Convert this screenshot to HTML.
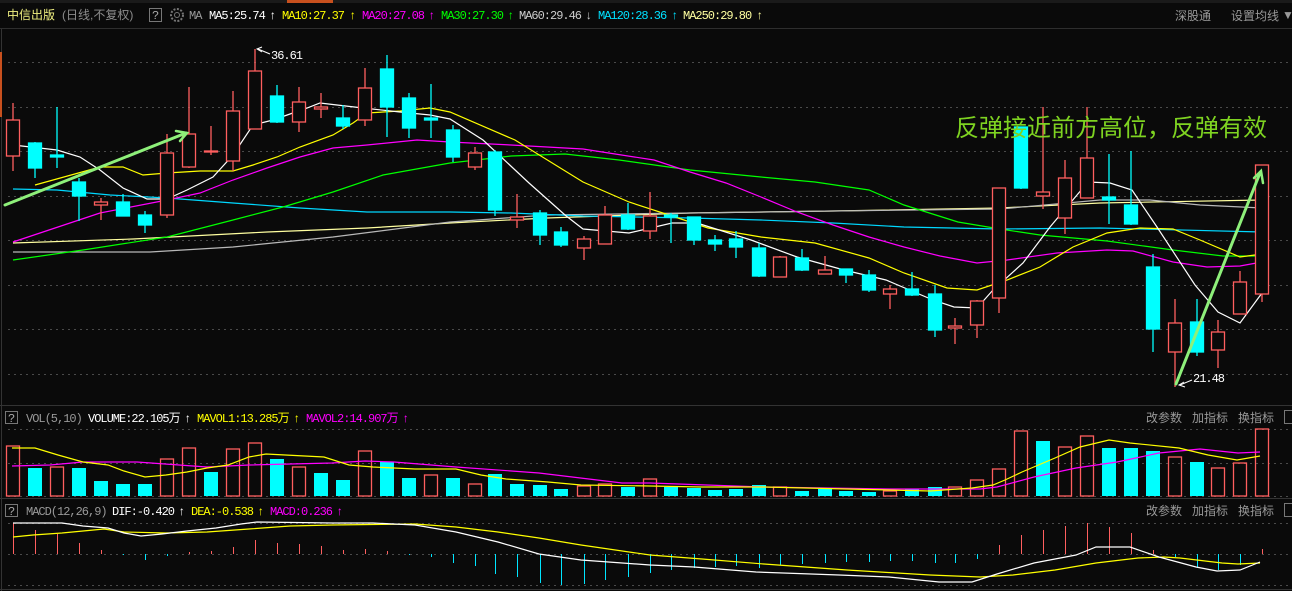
<!DOCTYPE html>
<html><head><meta charset="utf-8"><style>
html,body{margin:0;padding:0;background:#0a0a0a;}
svg{display:block}
.m{font-family:"Liberation Mono",monospace;font-size:12px;letter-spacing:-1px}
.c{font-family:"Liberation Sans","Noto Sans CJK SC",sans-serif;font-size:12px}
</style></head><body>
<svg width="1292" height="591" viewBox="0 0 1292 591" xmlns="http://www.w3.org/2000/svg">
<rect width="1292" height="591" fill="#0a0a0a"/>
<rect x="0" y="0" width="1292" height="3" fill="#1a1a1a"/>
<rect x="287" y="0" width="46" height="3" fill="#c8501e"/>
<line x1="0" y1="28.5" x2="1292" y2="28.5" stroke="#2e2e2e"/>
<line x1="1.5" y1="29" x2="1.5" y2="591" stroke="#333"/>
<rect x="0" y="52" width="2" height="65" fill="#c8501e"/>
<line x1="0" y1="405.5" x2="1292" y2="405.5" stroke="#333"/>
<line x1="0" y1="498.5" x2="1292" y2="498.5" stroke="#333"/>
<line x1="0" y1="589.5" x2="1292" y2="589.5" stroke="#333"/>
<g stroke="#4a4a4a" stroke-dasharray="2,4" stroke-width="1">
<line x1="8" y1="62.5" x2="1292" y2="62.5"/><line x1="8" y1="107.5" x2="1292" y2="107.5"/>
<line x1="8" y1="151.5" x2="1292" y2="151.5"/><line x1="8" y1="196.5" x2="1292" y2="196.5"/>
<line x1="8" y1="240.5" x2="1292" y2="240.5"/><line x1="8" y1="285.5" x2="1292" y2="285.5"/>
<line x1="8" y1="329.5" x2="1292" y2="329.5"/><line x1="8" y1="374.5" x2="1292" y2="374.5"/>
<line x1="8" y1="429.5" x2="1292" y2="429.5"/><line x1="8" y1="463.5" x2="1292" y2="463.5"/>
<line x1="8" y1="496.5" x2="1292" y2="496.5"/>
<line x1="8" y1="523.5" x2="1292" y2="523.5"/><line x1="8" y1="554.5" x2="1292" y2="554.5"/>
<line x1="8" y1="585.5" x2="1292" y2="585.5"/>
</g>
<text x="7" y="19" class="c" fill="#f0f080">中信出版</text>
<text x="62" y="19" class="c" fill="#8c8c8c">(日线,不复权)</text>
<rect x="149.5" y="8.5" width="12" height="13" fill="none" stroke="#777"/>
<text x="152" y="19" class="m" fill="#aaa">?</text>
<circle cx="177" cy="15" r="6" fill="none" stroke="#777" stroke-width="2" stroke-dasharray="2,1.5"/>
<circle cx="177" cy="15" r="2.5" fill="none" stroke="#777"/>
<text x="189" y="19" class="m" fill="#999">MA</text>
<text x="209" y="19" class="m" fill="#fff">MA5:25.74</text><text x="269" y="19" class="m" fill="#fff">↑</text>
<text x="282" y="19" class="m" fill="#ff0">MA10:27.37</text><text x="349" y="19" class="m" fill="#ff0">↑</text>
<text x="362" y="19" class="m" fill="#f0f">MA20:27.08</text><text x="428" y="19" class="m" fill="#f0f">↑</text>
<text x="441" y="19" class="m" fill="#0f0">MA30:27.30</text><text x="507" y="19" class="m" fill="#0f0">↑</text>
<text x="519" y="19" class="m" fill="#ccc">MA60:29.46</text><text x="585" y="19" class="m" fill="#ccc">↓</text>
<text x="598" y="19" class="m" fill="#00e0ff">MA120:28.36</text><text x="671" y="19" class="m" fill="#00e0ff">↑</text>
<text x="683" y="19" class="m" fill="#ffffa0">MA250:29.80</text><text x="756" y="19" class="m" fill="#ffffa0">↑</text>
<text x="1175" y="20" class="c" fill="#999">深股通</text>
<text x="1231" y="20" class="c" fill="#999">设置均线</text>
<text x="1282" y="19" class="c" fill="#999" font-size="9">▼</text>

<g fill="none" stroke-width="1.2">
<polyline stroke="#ffffa0" points="13,243 133,239 267,232 367,228 450,223 547,218 690,213 833,211 1000,208 1100,203 1262,200"/>
<polyline stroke="#b8b8b8" points="13,252 150,252 233,247 333,237 450,222 547,215 690,213 833,211 1000,209 1100,200 1150,200 1200,205 1262,208"/>
<polyline stroke="#00d8ff" points="13,189 57,190 110,195 167,198 233,203 300,208 367,212 450,212 511,213 583,216 690,218 761,220 833,223 904,227 1000,229 1100,228 1262,232"/>
<polyline stroke="#00ff00" points="13,260 83,250 167,237 233,220 283,207 333,192 383,175 450,163 511,156 565,154 619,160 690,170 761,177 815,182 869,190 904,205 958,222 1000,229 1040,235 1107,241 1173,250 1223,256 1262,256"/>
<polyline stroke="#ff00ff" points="13,242 100,213 167,200 200,193 233,180 267,168 300,157 333,148 367,145 417,140 450,142 511,145 583,149 654,160 690,172 726,183 761,197 797,212 833,225 869,237 904,247 940,256 977,263 1007,260 1057,253 1107,250 1133,251 1173,262 1207,267 1240,266 1262,262"/>
<polyline stroke="#ffff00" points="35,185 100,167 123,167 143,175 167,173 200,171 233,171 253,165 277,157 300,147 333,135 353,123 367,113 400,111 430,108 450,112 515,140 583,182 629,202 669,215 708,228 761,237 815,243 869,258 904,273 947,288 977,290 1007,280 1040,267 1073,247 1107,233 1140,228 1173,229 1200,240 1240,257 1262,254"/>
<polyline stroke="#ffffff" points="13,145 57,150 80,157 100,170 123,188 147,199 167,199 187,190 213,177 233,155 253,125 273,120 307,108 320,103 337,105 363,108 400,112 430,115 450,119 483,140 529,183 565,215 583,229 629,233 672,223 697,223 751,240 797,257 844,270 886,280 933,300 954,307 977,308 993,290 1023,263 1050,227 1088,182 1110,183 1132,190 1157,227 1195,285 1218,312 1240,323 1262,293"/>
</g>

<g stroke-width="1.3">
<g stroke="#ff5f5f" fill="#0a0a0a">
<line x1="13" y1="103" x2="13" y2="171"/><rect x="6.5" y="120" width="13" height="36"/>
<line x1="101" y1="198" x2="101" y2="220"/><rect x="94.5" y="202" width="13" height="3"/>
<line x1="167" y1="134" x2="167" y2="218"/><rect x="160.5" y="153" width="13" height="62"/>
<line x1="189" y1="87" x2="189" y2="168"/><rect x="182.5" y="134" width="13" height="33"/>
<line x1="211" y1="126" x2="211" y2="155"/><rect x="204.5" y="151" width="13" height="1"/>
<line x1="233" y1="91" x2="233" y2="171"/><rect x="226.5" y="111" width="13" height="50"/>
<line x1="255" y1="49" x2="255" y2="129"/><rect x="248.5" y="71" width="13" height="58"/>
<line x1="299" y1="87" x2="299" y2="132"/><rect x="292.5" y="102" width="13" height="20"/>
<line x1="321" y1="93" x2="321" y2="118"/><rect x="314.5" y="107" width="13" height="2"/>
<line x1="365" y1="68" x2="365" y2="126"/><rect x="358.5" y="88" width="13" height="32"/>
<line x1="475" y1="147" x2="475" y2="170"/><rect x="468.5" y="153" width="13" height="14"/>
<line x1="517" y1="194" x2="517" y2="228"/><rect x="510.5" y="217" width="13" height="3"/>
<line x1="584" y1="236" x2="584" y2="260"/><rect x="577.5" y="239" width="13" height="9"/>
<line x1="605" y1="206" x2="605" y2="244"/><rect x="598.5" y="215" width="13" height="29"/>
<line x1="650" y1="192" x2="650" y2="239"/><rect x="643.5" y="216" width="13" height="15"/>
<line x1="780" y1="256" x2="780" y2="277"/><rect x="773.5" y="257" width="13" height="20"/>
<line x1="825" y1="256" x2="825" y2="274"/><rect x="818.5" y="270" width="13" height="4"/>
<line x1="890" y1="285" x2="890" y2="309"/><rect x="883.5" y="289" width="13" height="5"/>
<line x1="955" y1="318" x2="955" y2="344"/><rect x="948.5" y="326" width="13" height="2"/>
<line x1="977" y1="300" x2="977" y2="338"/><rect x="970.5" y="301" width="13" height="24"/>
<line x1="999" y1="188" x2="999" y2="313"/><rect x="992.5" y="188" width="13" height="110"/>
<line x1="1043" y1="107" x2="1043" y2="209"/><rect x="1036.5" y="192" width="13" height="4"/>
<line x1="1065" y1="160" x2="1065" y2="234"/><rect x="1058.5" y="178" width="13" height="40"/>
<line x1="1087" y1="107" x2="1087" y2="198"/><rect x="1080.5" y="158" width="13" height="40"/>
<line x1="1175" y1="299" x2="1175" y2="387"/><rect x="1168.5" y="323" width="13" height="29"/>
<line x1="1218" y1="320" x2="1218" y2="368"/><rect x="1211.5" y="332" width="13" height="18"/>
<line x1="1240" y1="271" x2="1240" y2="314"/><rect x="1233.5" y="282" width="13" height="32"/>
<line x1="1262" y1="165" x2="1262" y2="302"/><rect x="1255.5" y="165" width="13" height="129"/>
</g>
<g stroke="#00ffff" fill="#00ffff">
<line x1="35" y1="142" x2="35" y2="178"/><rect x="28.5" y="143" width="13" height="25"/>
<line x1="57" y1="107" x2="57" y2="168"/><rect x="50.5" y="155" width="13" height="2"/>
<line x1="79" y1="178" x2="79" y2="221"/><rect x="72.5" y="182" width="13" height="14"/>
<line x1="123" y1="194" x2="123" y2="216"/><rect x="116.5" y="202" width="13" height="14"/>
<line x1="145" y1="211" x2="145" y2="233"/><rect x="138.5" y="215" width="13" height="10"/>
<line x1="277" y1="85" x2="277" y2="123"/><rect x="270.5" y="96" width="13" height="26"/>
<line x1="343" y1="105" x2="343" y2="129"/><rect x="336.5" y="118" width="13" height="8"/>
<line x1="387" y1="55" x2="387" y2="137"/><rect x="380.5" y="69" width="13" height="38"/>
<line x1="409" y1="93" x2="409" y2="138"/><rect x="402.5" y="98" width="13" height="30"/>
<line x1="431" y1="84" x2="431" y2="138"/><rect x="424.5" y="118" width="13" height="2"/>
<line x1="453" y1="125" x2="453" y2="162"/><rect x="446.5" y="130" width="13" height="27"/>
<line x1="495" y1="150" x2="495" y2="216"/><rect x="488.5" y="152" width="13" height="58"/>
<line x1="540" y1="210" x2="540" y2="245"/><rect x="533.5" y="213" width="13" height="22"/>
<line x1="561" y1="227" x2="561" y2="247"/><rect x="554.5" y="232" width="13" height="13"/>
<line x1="628" y1="203" x2="628" y2="230"/><rect x="621.5" y="215" width="13" height="14"/>
<line x1="671" y1="213" x2="671" y2="243"/><rect x="664.5" y="215" width="13" height="2"/>
<line x1="694" y1="217" x2="694" y2="245"/><rect x="687.5" y="217" width="13" height="23"/>
<line x1="715" y1="235" x2="715" y2="251"/><rect x="708.5" y="240" width="13" height="4"/>
<line x1="736" y1="231" x2="736" y2="258"/><rect x="729.5" y="239" width="13" height="8"/>
<line x1="759" y1="243" x2="759" y2="277"/><rect x="752.5" y="248" width="13" height="28"/>
<line x1="802" y1="249" x2="802" y2="271"/><rect x="795.5" y="258" width="13" height="12"/>
<line x1="846" y1="269" x2="846" y2="283"/><rect x="839.5" y="269" width="13" height="6"/>
<line x1="869" y1="270" x2="869" y2="292"/><rect x="862.5" y="275" width="13" height="15"/>
<line x1="912" y1="272" x2="912" y2="296"/><rect x="905.5" y="289" width="13" height="6"/>
<line x1="935" y1="285" x2="935" y2="337"/><rect x="928.5" y="294" width="13" height="36"/>
<line x1="1021" y1="127" x2="1021" y2="189"/><rect x="1014.5" y="127" width="13" height="61"/>
<line x1="1109" y1="154" x2="1109" y2="224"/><rect x="1102.5" y="197" width="13" height="3"/>
<line x1="1131" y1="151" x2="1131" y2="225"/><rect x="1124.5" y="205" width="13" height="19"/>
<line x1="1153" y1="254" x2="1153" y2="352"/><rect x="1146.5" y="267" width="13" height="62"/>
<line x1="1197" y1="299" x2="1197" y2="356"/><rect x="1190.5" y="322" width="13" height="30"/>
</g>
</g>

<g stroke="#8ef07a" stroke-width="3" fill="none" stroke-linecap="round">
<line x1="5" y1="205" x2="186" y2="133"/>
<polyline points="176,131 187,133 180,141" stroke-width="2.5"/>
<line x1="1176" y1="384" x2="1260" y2="173"/>
<polyline points="1254,178 1261,171 1263,183" stroke-width="2.5"/>
</g>
<text x="955" y="136" font-family="Liberation Sans,'Noto Sans CJK SC',sans-serif" font-size="24" fill="#7ed321">反弹接近前方高位，反弹有效</text>
<g stroke="#fff" stroke-width="1" fill="none"><line x1="258" y1="49" x2="270" y2="54"/><polyline points="262,47 257,49 262,52"/>
<line x1="1180" y1="385" x2="1192" y2="380"/><polyline points="1184,382 1179,385 1185,387"/></g>
<text x="271" y="59" class="m" fill="#fff" font-size="11">36.61</text>
<text x="1193" y="382" class="m" fill="#fff" font-size="11">21.48</text>

<rect x="5.5" y="411.5" width="12" height="12" fill="none" stroke="#777"/>
<text x="8" y="422" class="m" fill="#aaa">?</text>
<text x="26" y="422" class="m" fill="#999">VOL(5,10)</text>
<text x="88" y="422" class="m" fill="#fff">VOLUME:22.105<tspan class="c" letter-spacing="0">万</tspan></text><text x="184" y="422" class="m" fill="#fff">↑</text>
<text x="197" y="422" class="m" fill="#ff0">MAVOL1:13.285<tspan class="c" letter-spacing="0">万</tspan></text><text x="293" y="422" class="m" fill="#ff0">↑</text>
<text x="306" y="422" class="m" fill="#f0f">MAVOL2:14.907<tspan class="c" letter-spacing="0">万</tspan></text><text x="402" y="422" class="m" fill="#f0f">↑</text>
<text x="1146" y="422" class="c" fill="#999">改参数</text><text x="1192" y="422" class="c" fill="#999">加指标</text><text x="1238" y="422" class="c" fill="#999">换指标</text>
<rect x="1284.5" y="410.5" width="12" height="13" fill="none" stroke="#777"/>

<g stroke-width="1.3">
<g stroke="#ff5f5f" fill="none">
<rect x="6.5" y="446" width="13" height="50"/><rect x="50.5" y="467" width="13" height="29"/>
<rect x="160.5" y="459" width="13" height="37"/><rect x="182.5" y="448" width="13" height="48"/>
<rect x="226.5" y="449" width="13" height="47"/><rect x="248.5" y="443" width="13" height="53"/>
<rect x="292.5" y="467" width="13" height="29"/><rect x="358.5" y="451" width="13" height="45"/>
<rect x="424.5" y="475" width="13" height="21"/><rect x="468.5" y="484" width="13" height="12"/>
<rect x="577.5" y="486" width="13" height="10"/><rect x="598.5" y="484" width="13" height="12"/>
<rect x="643.5" y="479" width="13" height="17"/><rect x="773.5" y="487" width="13" height="9"/>
<rect x="883.5" y="491" width="13" height="5"/><rect x="948.5" y="487" width="13" height="9"/>
<rect x="970.5" y="480" width="13" height="16"/><rect x="992.5" y="469" width="13" height="27"/>
<rect x="1014.5" y="431" width="13" height="65"/><rect x="1058.5" y="447" width="13" height="49"/>
<rect x="1080.5" y="436" width="13" height="60"/><rect x="1168.5" y="457" width="13" height="39"/>
<rect x="1211.5" y="468" width="13" height="28"/><rect x="1233.5" y="463" width="13" height="33"/>
<rect x="1255.5" y="429" width="13" height="67"/>
</g>
<g fill="#00ffff">
<rect x="28" y="468" width="14" height="28"/><rect x="72" y="468" width="14" height="28"/>
<rect x="94" y="481" width="14" height="15"/><rect x="116" y="484" width="14" height="12"/>
<rect x="138" y="484" width="14" height="12"/><rect x="204" y="472" width="14" height="24"/>
<rect x="270" y="459" width="14" height="37"/><rect x="314" y="473" width="14" height="23"/>
<rect x="336" y="480" width="14" height="16"/><rect x="380" y="462" width="14" height="34"/>
<rect x="402" y="478" width="14" height="18"/><rect x="446" y="478" width="14" height="18"/>
<rect x="488" y="474" width="14" height="22"/><rect x="510" y="484" width="14" height="12"/>
<rect x="533" y="485" width="14" height="11"/><rect x="554" y="489" width="14" height="7"/>
<rect x="621" y="487" width="14" height="9"/><rect x="664" y="487" width="14" height="9"/>
<rect x="687" y="488" width="14" height="8"/><rect x="708" y="490" width="14" height="6"/>
<rect x="729" y="489" width="14" height="7"/><rect x="752" y="485" width="14" height="11"/>
<rect x="795" y="491" width="14" height="5"/><rect x="818" y="489" width="14" height="7"/>
<rect x="839" y="491" width="14" height="5"/><rect x="862" y="492" width="14" height="4"/>
<rect x="905" y="489" width="14" height="7"/><rect x="928" y="487" width="14" height="9"/>
<rect x="1036" y="441" width="14" height="55"/><rect x="1102" y="448" width="14" height="48"/>
<rect x="1124" y="448" width="14" height="48"/><rect x="1146" y="451" width="14" height="45"/>
<rect x="1190" y="462" width="14" height="34"/>
</g>
</g>
<g fill="none" stroke-width="1.2">
<polyline stroke="#ff00ff" points="12,466 50,465 83,462 137,462 207,467 249,465 332,463 365,461 394,462 456,467 539,473 622,483 650,483 764,487 889,489 980,489 997,487 1034,477 1076,468 1117,462 1159,453 1200,449 1238,453 1260,452"/>
<polyline stroke="#ffff00" points="12,448 35,448 58,455 83,462 108,465 124,471 145,477 166,475 187,472 207,468 228,465 249,457 266,454 324,457 349,465 373,467 415,469 456,469 481,475 506,479 548,482 581,485 650,486 702,487 764,487 847,489 930,491 972,488 993,485 1005,480 1022,472 1055,458 1080,447 1109,440 1130,443 1179,448 1208,455 1237,460 1260,456"/>
</g>

<rect x="5.5" y="504.5" width="12" height="12" fill="none" stroke="#777"/>
<text x="8" y="515" class="m" fill="#aaa">?</text>
<text x="26" y="515" class="m" fill="#999">MACD(12,26,9)</text>
<text x="112" y="515" class="m" fill="#fff">DIF:-0.420</text><text x="178" y="515" class="m" fill="#fff">↑</text>
<text x="191" y="515" class="m" fill="#ff0">DEA:-0.538</text><text x="257" y="515" class="m" fill="#ff0">↑</text>
<text x="270" y="515" class="m" fill="#f0f">MACD:0.236</text><text x="336" y="515" class="m" fill="#f0f">↑</text>
<text x="1146" y="515" class="c" fill="#999">改参数</text><text x="1192" y="515" class="c" fill="#999">加指标</text><text x="1238" y="515" class="c" fill="#999">换指标</text>
<rect x="1284.5" y="503.5" width="12" height="13" fill="none" stroke="#777"/>

<g stroke="#ff5f5f" stroke-width="1">
<line x1="13.5" y1="523" x2="13.5" y2="554"/><line x1="35.5" y1="530" x2="35.5" y2="554"/>
<line x1="57.5" y1="534" x2="57.5" y2="554"/><line x1="79.5" y1="543" x2="79.5" y2="554"/>
<line x1="101.5" y1="550" x2="101.5" y2="554"/><line x1="189.5" y1="552" x2="189.5" y2="554"/>
<line x1="211.5" y1="551" x2="211.5" y2="554"/><line x1="233.5" y1="547" x2="233.5" y2="554"/>
<line x1="255.5" y1="540" x2="255.5" y2="554"/><line x1="277.5" y1="543" x2="277.5" y2="554"/>
<line x1="299.5" y1="544" x2="299.5" y2="554"/><line x1="321.5" y1="546" x2="321.5" y2="554"/>
<line x1="343.5" y1="550" x2="343.5" y2="554"/><line x1="365.5" y1="549" x2="365.5" y2="554"/>
<line x1="387.5" y1="551" x2="387.5" y2="554"/>
<line x1="999.5" y1="545" x2="999.5" y2="554"/><line x1="1021.5" y1="535" x2="1021.5" y2="554"/>
<line x1="1043.5" y1="530" x2="1043.5" y2="554"/><line x1="1065.5" y1="526" x2="1065.5" y2="554"/>
<line x1="1087.5" y1="523" x2="1087.5" y2="554"/><line x1="1109.5" y1="527" x2="1109.5" y2="554"/>
<line x1="1131.5" y1="533" x2="1131.5" y2="554"/><line x1="1153.5" y1="550" x2="1153.5" y2="554"/>
<line x1="1262.5" y1="549" x2="1262.5" y2="554"/>
</g>
<g stroke="#00e5ff" stroke-width="1">
<line x1="123.5" y1="554" x2="123.5" y2="555"/><line x1="145.5" y1="554" x2="145.5" y2="560"/>
<line x1="167.5" y1="554" x2="167.5" y2="556"/><line x1="409.5" y1="554" x2="409.5" y2="555"/>
<line x1="431.5" y1="554" x2="431.5" y2="557"/><line x1="453.5" y1="554" x2="453.5" y2="563"/>
<line x1="475.5" y1="554" x2="475.5" y2="566"/><line x1="495.5" y1="554" x2="495.5" y2="574"/>
<line x1="517.5" y1="554" x2="517.5" y2="577"/><line x1="540.5" y1="554" x2="540.5" y2="583"/>
<line x1="561.5" y1="554" x2="561.5" y2="585"/><line x1="584.5" y1="554" x2="584.5" y2="584"/>
<line x1="605.5" y1="554" x2="605.5" y2="580"/><line x1="628.5" y1="554" x2="628.5" y2="577"/>
<line x1="650.5" y1="554" x2="650.5" y2="573"/><line x1="671.5" y1="554" x2="671.5" y2="570"/>
<line x1="694.5" y1="554" x2="694.5" y2="568"/><line x1="715.5" y1="554" x2="715.5" y2="567"/>
<line x1="736.5" y1="554" x2="736.5" y2="566"/><line x1="759.5" y1="554" x2="759.5" y2="568"/>
<line x1="780.5" y1="554" x2="780.5" y2="565"/><line x1="802.5" y1="554" x2="802.5" y2="564"/>
<line x1="825.5" y1="554" x2="825.5" y2="563"/><line x1="846.5" y1="554" x2="846.5" y2="562"/>
<line x1="869.5" y1="554" x2="869.5" y2="562"/><line x1="890.5" y1="554" x2="890.5" y2="561"/>
<line x1="912.5" y1="554" x2="912.5" y2="561"/><line x1="935.5" y1="554" x2="935.5" y2="563"/>
<line x1="955.5" y1="554" x2="955.5" y2="563"/><line x1="977.5" y1="554" x2="977.5" y2="559"/>
<line x1="1175.5" y1="554" x2="1175.5" y2="557"/><line x1="1197.5" y1="554" x2="1197.5" y2="568"/>
<line x1="1218.5" y1="554" x2="1218.5" y2="570"/><line x1="1240.5" y1="554" x2="1240.5" y2="565"/>
</g>
<g fill="none" stroke-width="1.2">
<polyline stroke="#ffff00" points="13,537 33,535 62,533 104,529 124,532 166,533 207,532 249,529 290,526 332,525 415,524 456,527 498,532 539,538 581,545 650,555 702,559 764,564 847,570 930,575 980,577 1013,575 1055,570 1096,563 1138,558 1164,557 1180,558 1222,563 1238,564 1260,563"/>
<polyline stroke="#ffffff" points="13,523 62,523 83,526 108,528 124,533 141,536 162,534 187,531 216,528 241,524 257,522 332,523 373,523 415,525 456,532 498,542 539,554 581,560 650,565 694,567 756,572 839,575 889,577 939,582 972,582 997,574 1034,563 1076,555 1096,547 1130,547 1159,557 1196,567 1217,571 1240,570 1260,562"/>
</g>
</svg>
</body></html>
